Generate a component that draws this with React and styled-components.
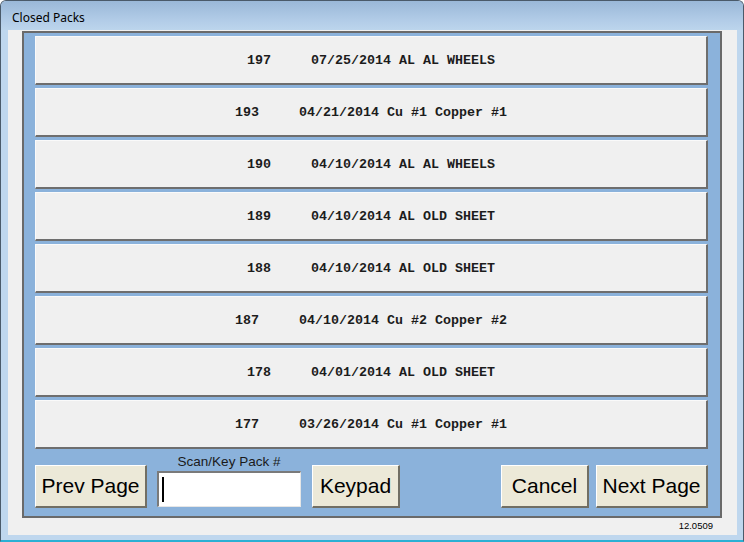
import React from "react";
import styled, { createGlobalStyle } from "styled-components";

const Global = createGlobalStyle`
  html, body { margin: 0; padding: 0; background: #ffffff; }
  #root { width: 744px; height: 542px; }
`;

const Window = styled.div`
  box-sizing: border-box;
  width: 744px;
  height: 542px;
  display: flex;
  flex-direction: column;
  background: #bfd7ee;
  border: 1px solid #4a5a6a;
  border-bottom: 2px solid #2bb0d4;
  border-radius: 6px 6px 0 0;
  overflow: hidden;
`;

const TitleBar = styled.div`
  box-sizing: border-box;
  height: 29px;
  flex: none;
  display: flex;
  align-items: center;
  padding: 4px 0 0 11px;
  background: linear-gradient(#9ab8d8, #b3cde8 70%, #bcd5ec);
  font-family: "Noto Sans", "Open Sans", sans-serif;
  font-size: 12px;
  color: #000;
`;

const Client = styled.div`
  flex: 1;
  margin: 0 6px 5px 7px;
  background: #f0f0f0;
  display: flex;
  flex-direction: column;
  padding: 1px 14px 0 14px;
`;

const Panel = styled.div`
  box-sizing: border-box;
  width: 700px;
  height: 487px;
  background: #8bb2db;
  border: 2px solid #6a6a6a;
  padding: 3px 12px 8px 11px;
  display: flex;
  flex-direction: column;
`;

const List = styled.div`
  display: flex;
  flex-direction: column;
  gap: 3px;
`;

const Row = styled.button`
  box-sizing: border-box;
  height: 49px;
  width: 100%;
  margin: 0;
  padding: 0;
  background: #f0f0f0;
  border-style: solid;
  border-width: 1px 2px 2px 1px;
  border-color: #fafafa #6e6e6e #6e6e6e #fafafa;
  font-family: "Liberation Mono", "Courier New", monospace;
  font-weight: bold;
  font-size: 13.33px;
  color: #1c1c1c;
  white-space: pre;
  display: flex;
  align-items: center;
  justify-content: center;
`;

const Bottom = styled.div`
  flex: 1;
  display: flex;
  align-items: flex-end;
`;

const Btn = styled.button`
  box-sizing: border-box;
  height: 43px;
  width: ${(p) => p.$w}px;
  margin: 0 0 0 ${(p) => p.$ml || 0}px;
  padding: 0;
  background: #ece9d8;
  border-style: solid;
  border-width: 1px 2px 2px 1px;
  border-color: #ffffff #716f64 #716f64 #ffffff;
  font-family: "Liberation Sans", Arial, sans-serif;
  font-size: 21px;
  color: #000;
`;

const Field = styled.div`
  display: flex;
  flex-direction: column;
  align-items: center;
  margin-left: 10px;
  margin-bottom: 1px;
`;

const FieldLabel = styled.div`
  font-family: "Liberation Sans", Arial, sans-serif;
  font-size: 13.5px;
  line-height: 15px;
  color: #1a1a1a;
  margin-bottom: 2px;
`;

const Input = styled.div`
  box-sizing: border-box;
  width: 144px;
  height: 36px;
  background: #fff;
  border-style: solid;
  border-width: 2px 1px 1px 2px;
  border-color: #7a7a7a #e6e6e6 #e6e6e6 #7a7a7a;
  display: flex;
  align-items: center;
  padding-left: 3px;
`;

const Caret = styled.span`
  width: 2px;
  height: 25px;
  background: #000;
`;

const Spacer = styled.div`
  flex: 1;
`;

const Version = styled.div`
  align-self: flex-end;
  margin: 2px 10px 0 0;
  font-family: "Liberation Sans", Arial, sans-serif;
  font-size: 9.5px;
  color: #000;
`;

const packs = [
  "197     07/25/2014 AL AL WHEELS",
  "193     04/21/2014 Cu #1 Copper #1",
  "190     04/10/2014 AL AL WHEELS",
  "189     04/10/2014 AL OLD SHEET",
  "188     04/10/2014 AL OLD SHEET",
  "187     04/10/2014 Cu #2 Copper #2",
  "178     04/01/2014 AL OLD SHEET",
  "177     03/26/2014 Cu #1 Copper #1",
];

export default function App() {
  return (
    <>
      <Global />
      <Window>
        <TitleBar>Closed Packs</TitleBar>
        <Client>
          <Panel>
            <List>
              {packs.map((p) => (
                <Row key={p}>{p}</Row>
              ))}
            </List>
            <Bottom>
              <Btn $w={112}>Prev Page</Btn>
              <Field>
                <FieldLabel>Scan/Key Pack #</FieldLabel>
                <Input>
                  <Caret />
                </Input>
              </Field>
              <Btn $w={88} $ml={11}>Keypad</Btn>
              <Spacer />
              <Btn $w={88}>Cancel</Btn>
              <Btn $w={112} $ml={7}>Next Page</Btn>
            </Bottom>
          </Panel>
          <Version>12.0509</Version>
        </Client>
      </Window>
    </>
  );
}
